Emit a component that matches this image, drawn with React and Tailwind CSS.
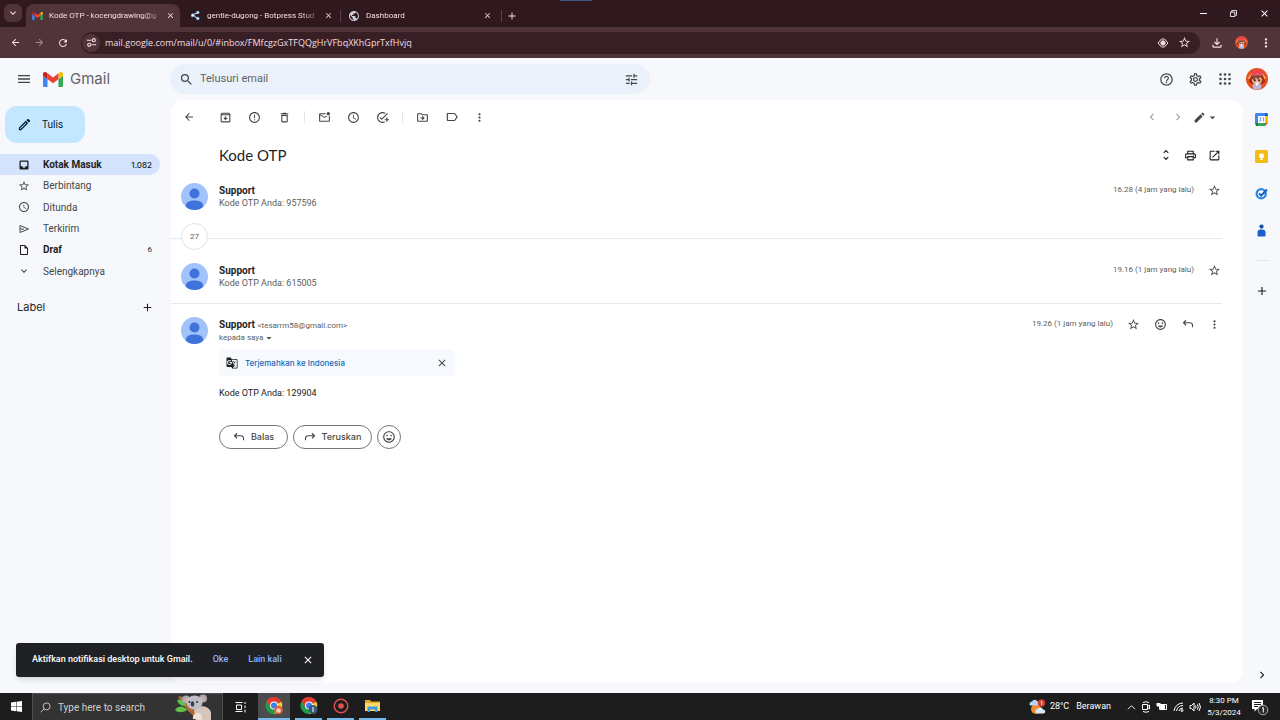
import React from "react";
import {
  MdArrowBack, MdArrowForward, MdRefresh, MdOutlineArchive, MdErrorOutline, MdOutlineDelete,
  MdOutlineMarkEmailUnread, MdAccessTime, MdOutlineAddTask, MdOutlineDriveFileMove,
  MdLabelOutline, MdMoreVert, MdChevronLeft, MdChevronRight, MdEdit, MdOutlineEdit, MdArrowDropDown,
  MdUnfoldMore, MdOutlinePrint, MdOpenInNew, MdStarBorder, MdInsertEmoticon, MdGTranslate,
  MdMenu, MdSearch, MdTune, MdHelpOutline, MdOutlineSettings, MdOutlineInsertDriveFile,
  MdKeyboardArrowDown, MdAdd, MdClose, MdPublic, MdOutlineFileDownload,
} from "react-icons/md";

const sans = "font-['Roboto','Open_Sans',sans-serif]";
const inter = "font-['Inter','Open_Sans',sans-serif]";
const openSans = "font-['Open_Sans','Noto_Sans',sans-serif]";

function GmailLogo({ className }) {
  return (
    <svg viewBox="52 42 88 66" className={className} aria-hidden="true">
      <path fill="#4285f4" d="M58 108h14V74L52 59v43c0 3.32 2.69 6 6 6" />
      <path fill="#34a853" d="M120 108h14c3.32 0 6-2.69 6-6V59l-20 15" />
      <path fill="#fbbc04" d="M120 48v26l20-15v-8c0-7.42-8.47-11.65-14.4-7.2" />
      <path fill="#ea4335" d="M72 74V48l24 18 24-18v26L96 92" />
      <path fill="#c5221f" d="M52 51v8l20 15V48l-5.6-4.2c-5.94-4.45-14.4-.22-14.4 7.2" />
    </svg>
  );
}

function ProfilePicture({ className }) {
  return (
    <svg viewBox="0 0 24 24" className={className} aria-hidden="true">
      <circle cx="12" cy="12" r="12" fill="#e8501c" />
      <path d="M6 5l3-4 3 3 4-3 3 5-2 3H7z" fill="#f0435a" />
      <path d="M2 11l4-5 1 2-3 4zM22 11l-4-5-1 2 3 4z" fill="#f8b27c" />
      <path d="M3 15l3-8 3 3-2 8zM21 15l-3-8-3 3 2 8z" fill="#a92b1a" />
      <circle cx="12" cy="12.5" r="5.500" fill="#e9b996" />
      <path d="M6 12c0-6 12-6 12 0l-3-2-2 3-2-3-2 3z" fill="#8a4630" />
      <circle cx="9.6" cy="13.500" r="1.200" fill="#3f2830" />
      <circle cx="14.4" cy="13.500" r="1.200" fill="#3f2830" />
      <path d="M7 19c2-3 8-3 10 0l-1 4a12 12 0 01-8 0z" fill="#b9b6dc" />
      <path d="M10 16h4l-2 4z" fill="#fff" />
    </svg>
  );
}

function Person() {
  return (
    <svg viewBox="0 0 27 27" className="size-[27px] shrink-0" role="img" aria-label="Support">
      <circle cx="13.500" cy="13.500" r="13.500" fill="#a1c2fa" />
      <circle cx="13.500" cy="10.500" r="5" fill="#4072dc" />
      <path d="M4.800 23.800v-1c0-3.800 3.800-5.400 8.700-5.400s8.700 1.600 8.700 5.400v1a13.500 13.500 0 01-17.400 0z" fill="#4072dc" />
    </svg>
  );
}

function ReplyArrow({ flip }) {
  return (
    <svg viewBox="0 0 24 24" className={flip ? "size-3 -scale-x-100" : "size-3"} fill="none" stroke="currentColor" strokeWidth="2.200" aria-hidden="true">
      <path d="M8 4.500L3 9.500l5 5M3 9.500h13a5 5 0 015 5v4" />
    </svg>
  );
}

function InboxIcon({ className }) {
  return (
    <svg viewBox="0 0 24 24" className={className} fill="currentColor" fillRule="evenodd" aria-hidden="true">
      <path d="M5 3h14a2 2 0 012 2v14a2 2 0 01-2 2H5a2 2 0 01-2-2V5a2 2 0 012-2zM5.500 5.500v9H9a3 3 0 006 0h3.500v-9z" />
    </svg>
  );
}

function SendIcon({ className }) {
  return (
    <svg viewBox="0 0 24 24" className={className} fill="none" stroke="currentColor" strokeWidth="2" aria-hidden="true">
      <path d="M4 5l17 7-17 7zM4 12h8" />
    </svg>
  );
}

function Dots() {
  return (
    <svg viewBox="0 0 12 12" className="size-3" fill="currentColor" aria-hidden="true">
      {[1.5, 6, 10.5].map((y) => [1.5, 6, 10.5].map((x) => <circle key={`${x}-${y}`} cx={x} cy={y} r="1.3" />))}
    </svg>
  );
}

function Chrome({ children }) {
  return (
    <svg viewBox="0 0 18 18" className="size-[18px]" aria-hidden="true">
      <path d="M9 8.500L1.600 4.200A8.500 8.500 0 0116.400 4.800z" fill="#e33b2e" />
      <path d="M9 8.500L16.400 4.800A8.500 8.500 0 019 17z" fill="#fcc934" />
      <path d="M9 8.500L1.600 4.200A8.500 8.500 0 009 17l3-6z" fill="#1e9e4a" />
      <path d="M9 4.700h7.400a8.500 8.500 0 00-14.800-.5L5.500 11z" fill="#e33b2e" />
      <circle cx="9" cy="8.500" r="4" fill="#fff" />
      <circle cx="9" cy="8.500" r="3.100" fill="#3b82ec" />
      {children}
    </svg>
  );
}

function IconButton({ label, className = "w-[29px]", children }) {
  return (
    <button type="button" aria-label={label} className={`flex h-6 shrink-0 items-center justify-center ${className}`}>
      {children}
    </button>
  );
}

function Tab({ icon, title, active, width }) {
  return (
    <div className={`flex h-[23px] items-center rounded-t-lg pl-[6px] pr-[5px] ${width} ${active ? "bg-[#51343a]" : ""}`}>
      {icon}
      <span className="ml-[6px] min-w-0 flex-1 whitespace-nowrap [mask-image:linear-gradient(to_right,black_80%,transparent)]">{title}</span>
      <button type="button" aria-label={`Tutup ${title}`} className="flex size-[10px] items-center justify-center"><MdClose className="size-[9px]" /></button>
    </div>
  );
}

function BrowserBar() {
  return (
    <header className="relative bg-[#30191e] text-[#f3dde0]">
      <span className="absolute left-[calc(50%-80px)] top-0 h-px w-8 bg-[#3d5a86]" />
      <div className="flex h-[27px] items-end text-[8px]">
        <button type="button" aria-label="Telusuri tab" className="mb-[5px] ml-1 flex size-[18px] items-center justify-center rounded-md bg-[#51343a]"><MdKeyboardArrowDown className="size-3" /></button>
        <div className="ml-1 flex flex-1 items-center">
          <Tab active width="w-[154px]" title="Kode OTP - kocengdrawing@g" icon={<GmailLogo className="h-2 w-[11px]" />} />
          <Tab
            width="w-[158px]"
            title="gentle-dugong - Botpress Stud"
            icon={
              <svg viewBox="0 0 11 11" className="ml-1 size-[11px]" fill="#fff" stroke="#6fb3e8" aria-hidden="true">
                <path d="M7.500 2.500L3 5l4.500 3.500" fill="none" stroke="#fff" />
                <circle cx="7.800" cy="2.500" r="1.300" /><circle cx="2.800" cy="5.300" r="1.500" /><circle cx="7.800" cy="8.500" r="1.300" />
              </svg>
            }
          />
          <span className="ml-[2px] h-3 w-px bg-[#5b3d43]" />
          <Tab width="w-[156px]" title="Dashboard" icon={<MdPublic className="ml-px size-3 text-[#c9ccd4]" />} />
          <span className="ml-1 h-3 w-px bg-[#5b3d43]" />
          <button type="button" aria-label="Tab baru" className="ml-[2px] p-[2px]"><MdAdd className="size-3" /></button>
        </div>
        <div className="flex h-full items-center text-white">
          <button type="button" aria-label="Minimalkan" className="flex w-[30px] justify-center"><span className="h-px w-[7px] bg-white" /></button>
          <button type="button" aria-label="Pulihkan" className="flex w-[31px] justify-center">
            <svg viewBox="0 0 8 8" className="size-[7px]" fill="none" stroke="currentColor" aria-hidden="true"><path d="M.5 2.500h5v5h-5zM2 2.500V.5h5.500V6H6" /></svg>
          </button>
          <button type="button" aria-label="Tutup" className="flex w-[31px] justify-center"><MdClose className="size-[11px]" /></button>
        </div>
      </div>
      <div className="flex h-[31px] items-center bg-[#51343a]">
        <IconButton label="Kembali" className="w-[30px]"><MdArrowBack className="size-[11px]" /></IconButton>
        <IconButton label="Maju" className="w-[18px] text-[#a98b90]"><MdArrowForward className="size-[11px]" /></IconButton>
        <IconButton label="Muat ulang" className="w-[29px]"><MdRefresh className="size-3" /></IconButton>
        <div className="ml-1 flex h-[22px] flex-1 items-center rounded-full bg-[#371f25] pl-px pr-[9px]">
          <button type="button" aria-label="Info situs" className="flex size-[18px] items-center justify-center rounded-full bg-[#51343a]">
            <svg viewBox="0 0 12 12" className="size-[11px]" fill="none" stroke="currentColor" strokeWidth="1.200" aria-hidden="true"><path d="M1 3.500h5M6 8.500h5" /><circle cx="8.500" cy="3.500" r="1.700" /><circle cx="3.500" cy="8.500" r="1.700" /></svg>
          </button>
          <input aria-label="Alamat" className={`ml-[5px] min-w-0 flex-1 bg-transparent text-[9px] outline-none ${openSans}`} defaultValue="mail.google.com/mail/u/0/#inbox/FMfcgzGxTFQQgHrVFbqXKhGprTxfHvjq" />
          <button type="button" aria-label="Pratinjau">
            <svg viewBox="0 0 12 12" className="size-3" fill="none" stroke="currentColor" aria-hidden="true"><path d="M1 6l3.500-4h3L11 6l-3.500 4h-3z" /><circle cx="6" cy="6" r="2.200" fill="currentColor" /></svg>
          </button>
          <button type="button" aria-label="Tandai halaman" className="ml-[9px]"><MdStarBorder className="size-[13px]" /></button>
        </div>
        <IconButton label="Unduhan" className="ml-[3px] w-[27px]"><MdOutlineFileDownload className="size-[14px]" /></IconButton>
        <IconButton label="Profil" className="w-[22px]"><ProfilePicture className="size-[13px]" /></IconButton>
        <IconButton label="Menu Chrome" className="w-7"><MdMoreVert className="size-[14px]" /></IconButton>
      </div>
    </header>
  );
}

function GmailHeader() {
  return (
    <div className="flex h-[42px] items-center text-[#444746]">
      <div className="flex w-[170px] items-center">
        <IconButton label="Menu utama" className="ml-[10px] w-7"><MdMenu className="size-4" /></IconButton>
        <a href="#inbox" className={`ml-[5px] flex items-center gap-[7px] text-[15px] text-[#5f6368] ${inter}`}><GmailLogo className="h-[15px] w-5" />Gmail</a>
      </div>
      <form className="flex h-[30px] w-[480px] items-center rounded-full bg-[#eaf1fb] pl-[9px] pr-[11px]" onSubmit={(e) => e.preventDefault()}>
        <button type="submit" aria-label="Telusuri"><MdSearch className="size-[15px]" /></button>
        <input aria-label="Telusuri email" placeholder="Telusuri email" className="ml-[6px] min-w-0 flex-1 bg-transparent text-[11px] outline-none placeholder:text-[#5f6368]" />
        <button type="button" aria-label="Opsi penelusuran"><MdTune className="size-[15px]" /></button>
      </form>
      <div className="ml-auto flex items-center">
        <IconButton label="Dukungan"><MdHelpOutline className="size-[15px]" /></IconButton>
        <IconButton label="Setelan"><MdOutlineSettings className="size-[15px]" /></IconButton>
        <IconButton label="Aplikasi Google"><Dots /></IconButton>
        <IconButton label="Akun Google" className="ml-[7px] mr-3 w-[22px]"><ProfilePicture className="size-[22px]" /></IconButton>
      </div>
    </div>
  );
}

const folders = [
  { label: "Kotak Masuk", Icon: InboxIcon, count: "1.082", active: true, bold: true },
  { label: "Berbintang", Icon: MdStarBorder },
  { label: "Ditunda", Icon: MdAccessTime },
  { label: "Terkirim", Icon: SendIcon },
  { label: "Draf", Icon: MdOutlineInsertDriveFile, count: "6", bold: true },
  { label: "Selengkapnya", Icon: MdKeyboardArrowDown },
];

function Sidebar() {
  return (
    <aside className="w-[171px] shrink-0 pt-[6px]">
      <button type="button" className="ml-[5px] flex h-[37px] w-20 items-center rounded-xl bg-[#c2e7ff] pl-3 text-[10px] text-[#001d35]">
        <MdOutlineEdit className="size-[15px]" /><span className="ml-[10px]">Tulis</span>
      </button>
      <nav aria-label="Folder" className="mt-[11px] grid h-32 w-40 grid-rows-6 text-[10px] text-[#444746]">
        {folders.map(({ label, Icon, count, active, bold }) => (
          <a key={label} href="#folder" className={`flex items-center rounded-r-full pl-[18px] pr-2 ${active ? "bg-[#d3e3fd] text-[#001d35]" : ""} ${bold ? "font-bold text-[#1f1f1f]" : ""}`}>
            <Icon className="size-3" /><span className="ml-[13px] flex-1">{label}</span>
            <span className={active ? `text-[8px] font-medium ${inter}` : "text-[8px] font-normal"}>{count}</span>
          </a>
        ))}
      </nav>
      <div className="mt-[17px] flex items-center pl-[17px] pr-[17px] text-[#1f1f1f]">
        <h2 className={`flex-1 text-[11px] ${inter}`}>Label</h2>
        <button type="button" aria-label="Buat label baru"><MdAdd className="size-[13px]" /></button>
      </div>
    </aside>
  );
}

function Toolbar() {
  const sep = "mx-[5px] h-3 w-px bg-[#e3e5e8]";
  return (
    <div className="flex h-[34px] items-center pl-[3px] pr-[21px] text-[#444746]">
      <IconButton label="Kembali ke Kotak Masuk" className="mr-2 w-[29px]"><MdArrowBack className="size-3" /></IconButton>
      <IconButton label="Arsipkan"><MdOutlineArchive className="size-[13px]" /></IconButton>
      <IconButton label="Laporkan spam"><MdErrorOutline className="size-[13px]" /></IconButton>
      <IconButton label="Hapus" className="w-[30px]"><MdOutlineDelete className="size-[13px]" /></IconButton>
      <span className={sep} />
      <IconButton label="Tandai belum dibaca"><MdOutlineMarkEmailUnread className="size-[13px]" /></IconButton>
      <IconButton label="Tunda"><MdAccessTime className="size-[13px]" /></IconButton>
      <IconButton label="Tambahkan ke Tasks"><MdOutlineAddTask className="size-[13px]" /></IconButton>
      <span className={sep} />
      <IconButton label="Pindahkan ke"><MdOutlineDriveFileMove className="size-[13px]" /></IconButton>
      <IconButton label="Label"><MdLabelOutline className="size-[14px]" /></IconButton>
      <IconButton label="Lainnya" className="w-[27px]"><MdMoreVert className="size-[13px]" /></IconButton>
      <div className="ml-auto flex items-center">
        <IconButton label="Lebih baru" className="w-[27px] text-[#a0a3a5]"><MdChevronLeft className="size-[14px]" /></IconButton>
        <IconButton label="Lebih lama" className="w-[25px] text-[#a0a3a5]"><MdChevronRight className="size-[14px]" /></IconButton>
        <IconButton label="Alat input" className="w-8"><MdEdit className="size-[13px]" /><MdArrowDropDown className="size-[13px]" /></IconButton>
      </div>
    </div>
  );
}

function MessageHead({ email, to, snippet, time, children }) {
  return (
    <div className="flex items-start pl-[10px] pr-[15px]">
      <Person />
      <div className="ml-[11px] min-w-0 flex-1 pt-px">
        <h3 className="text-[10px] font-bold leading-[13px] text-[#1f1f1f]">
          Support {email && <span className="text-[8px] font-normal text-[#5e5e5e]">&lt;{email}&gt;</span>}
        </h3>
        {snippet && <p className="text-[9px] leading-[13px] text-[#5e5e5e]">{snippet}</p>}
        {to && <button type="button" className="flex items-center text-[8px] leading-3 text-[#5e5e5e]">{to}<MdArrowDropDown className="size-3 text-[#444746]" /></button>}
      </div>
      <div className="flex h-[14px] items-center text-[#444746]">
        <time className="mr-[7px] text-[8px] text-[#5e5e5e]">{time}</time>
        <IconButton label="Bintangi" className="w-[27px]"><MdStarBorder className="size-[13px]" /></IconButton>
        {children}
      </div>
    </div>
  );
}

function Thread() {
  const pill = "flex h-6 items-center justify-center rounded-full border border-[#747775]";
  return (
    <main className="flex min-w-0 flex-1 flex-col rounded-xl bg-white">
      <Toolbar />
      <div className="flex h-[42px] items-center pl-12 pr-[17px] text-[#1f1f1f]">
        <h1 className="flex-1 font-['Lato',sans-serif] text-[15px]">Kode OTP</h1>
        <IconButton label="Luaskan semua" className="w-6"><MdUnfoldMore className="size-[14px]" /></IconButton>
        <IconButton label="Cetak semua" className="w-6"><MdOutlinePrint className="size-[13px]" /></IconButton>
        <IconButton label="Di jendela baru" className="w-6"><MdOpenInNew className="size-[13px]" /></IconButton>
      </div>
      <article className="relative h-[63px] pt-[7px]">
        <MessageHead snippet="Kode OTP Anda: 957596" time="16.28 (4 jam yang lalu)" />
        <hr className="absolute bottom-0 left-0 right-[21px] border-[#e6e8eb]" />
        <button type="button" aria-label="27 pesan lainnya" className="absolute -bottom-[11px] left-[10px] flex size-[27px] items-center justify-center rounded-full border border-[#dfe1e5] bg-white text-[8px] text-[#5e5e5e]">27</button>
      </article>
      <article className="h-16 pt-6">
        <MessageHead snippet="Kode OTP Anda: 615005" time="19.16 (1 jam yang lalu)" />
      </article>
      <hr className="mr-[21px] border-[#e6e8eb]" />
      <article className="pt-[13px]">
        <MessageHead email="tesarrm58@gmail.com" to="kepada saya" time="19.26 (1 jam yang lalu)">
          <IconButton label="Tambahkan reaksi" className="w-[27px]"><MdInsertEmoticon className="size-[13px]" /></IconButton>
          <IconButton label="Balas" className="w-[27px]"><ReplyArrow /></IconButton>
          <IconButton label="Lainnya" className="w-[27px]"><MdMoreVert className="size-[13px]" /></IconButton>
        </MessageHead>
        <div className={`ml-12 ${inter}`}>
          <div className="mt-[5px] flex h-[27px] w-[236px] items-center rounded bg-[#f6fafe] pl-[7px] pr-[7px] text-[8px]">
            <MdGTranslate className="size-3 text-[#1f1f1f]" />
            <a href="#translate" className="ml-[7px] flex-1 font-medium text-[#1a67b8]">Terjemahkan ke Indonesia</a>
            <button type="button" aria-label="Tutup terjemahan"><MdClose className="size-3 text-[#444746]" /></button>
          </div>
          <p className={`mt-[11px] text-[9px] leading-[13px] text-[#222222] ${sans}`}>Kode OTP Anda: 129904</p>
          <div className="mt-[25px] flex gap-[5px] text-[9px] font-medium text-[#444746]">
            <button type="button" className={`${pill} w-[69px] gap-[6px]`}><ReplyArrow />Balas</button>
            <button type="button" className={`${pill} w-[79px] gap-[6px]`}><ReplyArrow flip />Teruskan</button>
            <button type="button" aria-label="Tambahkan reaksi emoji" className={`${pill} w-6`}><MdInsertEmoticon className="size-[14px] shrink-0" /></button>
          </div>
        </div>
      </article>
    </main>
  );
}

function AppRail() {
  const item = "flex h-[37px] w-full items-center justify-center";
  return (
    <aside className="flex w-[37px] shrink-0 flex-col items-center pt-px text-[#1f1f1f]">
      <button type="button" aria-label="Kalender" className={item}>
        <svg viewBox="0 0 13 13" className="size-[13px]" aria-hidden="true">
          <path fill="#4285f4" d="M1 0h9v3H3v7H0V1z" /><path fill="#1967d2" d="M10 0h2l1 1v2h-3z" /><path fill="#fbbc04" d="M10 3h3v7h-3z" /><path fill="#34a853" d="M3 10h7v3H3z" /><path fill="#188038" d="M0 10h3v3H1z" /><path fill="#ea4335" d="M10 10h3l-3 3z" /><path fill="#fff" d="M3 3h7v7H3z" />
          <path fill="none" stroke="#4285f4" strokeWidth=".8" d="M4.300 4.800h1.600L5.200 6.200l.8.900-.6 1H4.200M7.500 5l1-.4v3.900" />
        </svg>
      </button>
      <button type="button" aria-label="Keep" className={item}>
        <svg viewBox="0 0 13 13" className="size-[13px]" aria-hidden="true"><rect width="13" height="13" rx="1.500" fill="#f5bb15" /><circle cx="6.500" cy="5.800" r="2.500" fill="#fff" /><path d="M5.300 8.500h2.400V10H5.300z" fill="#fff" /></svg>
      </button>
      <button type="button" aria-label="Tasks" className={item}>
        <svg viewBox="0 0 13 13" className="size-[13px]" fill="none" aria-hidden="true"><circle cx="6.200" cy="6.800" r="4.600" stroke="#2a86dc" strokeWidth="2.200" /><path d="M4 6.500l2.200 2L12 2.500" stroke="#1767b8" strokeWidth="2" /></svg>
      </button>
      <button type="button" aria-label="Kontak" className={item}>
        <svg viewBox="0 0 13 13" className="size-[13px]" aria-hidden="true"><circle cx="6.500" cy="2.600" r="2.100" fill="#174ea6" /><path d="M2.500 8.500a3 3 0 013-3h2a3 3 0 013 3v3a1 1 0 01-1 1h-6a1 1 0 01-1-1z" fill="#1a5fcb" /></svg>
      </button>
      <hr className="mt-[11px] w-[14px] border-[#e3e5e9]" />
      <IconButton label="Instal add-on" className="mt-[18px] w-[29px]"><MdAdd className="size-[14px]" /></IconButton>
      <IconButton label="Sembunyikan panel samping" className="mb-[-4px] mt-auto w-[29px]"><MdChevronRight className="size-[14px]" /></IconButton>
    </aside>
  );
}

function Toast() {
  return (
    <div role="status" className="absolute bottom-4 left-4 flex h-[34px] w-[308px] items-center gap-5 whitespace-nowrap rounded-[3px] bg-[#202124] px-4 text-[9px] font-medium text-white shadow-md">
      <span>Aktifkan notifikasi desktop untuk Gmail.</span>
      <button type="button" className="text-[#8ab4f8]">Oke</button>
      <button type="button" className="text-[#8ab4f8]">Lain kali</button>
      <button type="button" aria-label="Tutup notifikasi"><MdClose className="size-3" /></button>
    </div>
  );
}

function Koala() {
  return (
    <svg viewBox="0 0 38 26" className="h-[26px] w-[38px]" aria-hidden="true">
      <path d="M4 3l3-1 8 7 12 14-3 3-11-10z" fill="#b1682f" />
      <path d="M1 16c4-5 9-4 12 0-4 3-9 3-12 0zM3 6c5-1 8 2 9 6-5 0-8-2-9-6z" fill="#5fc04a" />
      <path d="M20 16c4-6 16-5 17 3v7H22z" fill="#d6c5b8" />
      <circle cx="12" cy="5.500" r="4" fill="#a9a6ad" /><circle cx="29" cy="4.500" r="4" fill="#a9a6ad" />
      <circle cx="12.500" cy="6" r="2" fill="#dcaaa6" /><circle cx="28.500" cy="5" r="2" fill="#dcaaa6" />
      <ellipse cx="20.500" cy="8.500" rx="8" ry="7" fill="#bfbdc6" />
      <ellipse cx="18.500" cy="10" rx="1.800" ry="2.800" fill="#3c3a44" /><circle cx="15.500" cy="8" r=".9" fill="#222" /><circle cx="23" cy="8" r=".9" fill="#222" />
      <path d="M19 25c-1-5 4-8 8-5l1 6z" fill="#efe1d6" />
    </svg>
  );
}

function Taskbar() {
  const app = "flex h-full w-[27px] items-center justify-center border-b-2 border-[#76b9ed]";
  return (
    <footer className="flex h-[27px] items-center bg-[#1d1d1d] text-white">
      <button type="button" aria-label="Mulai" className="flex w-8 justify-center">
        <svg viewBox="0 0 11 11" className="size-[11px]" fill="currentColor" aria-hidden="true"><path d="M0 1.500l5-.7v4.500H0zM5.500.700L11 0v5.300H5.500zM0 5.800h5v4.500l-5-.7zM5.500 5.800H11V11l-5.500-.8z" /></svg>
      </button>
      <button type="button" className="flex h-full w-[191px] items-center border border-b-0 border-[#505050] bg-[#333333] pl-[7px] pr-[10px] text-[10px] text-[#d0d0d0]">
        <svg viewBox="0 0 12 12" className="size-[11px]" fill="none" stroke="currentColor" aria-hidden="true"><circle cx="7.200" cy="4.800" r="3.800" /><path d="M4.500 7.500L.8 11.200" /></svg>
        <span className="ml-[7px] flex-1 text-left">Type here to search</span>
        <Koala />
      </button>
      <button type="button" aria-label="Tampilan tugas" className="flex w-[35px] justify-center">
        <svg viewBox="0 0 12 12" className="size-3" fill="none" stroke="currentColor" aria-hidden="true"><path d="M1.500 4h5v4.500h-5zM.5 1.500h7M.5 10.500h7M10 1v2M10 4.500v2.500M10 8.500v3" /></svg>
      </button>
      <div className="flex h-full gap-[5px]">
        <button type="button" aria-label="Google Chrome" className="flex h-full w-8 items-center justify-center border-b-2 border-[#76b9ed] bg-[#4b4b4b]">
          <Chrome><circle cx="13.500" cy="13" r="4.300" fill="#e0603a" /><circle cx="13.500" cy="13.500" r="2.300" fill="#f2d3bd" /></Chrome>
        </button>
        <button type="button" aria-label="Google Chrome profil 2" className={app}>
          <Chrome><circle cx="13" cy="12.500" r="4.500" fill="#3c5a78" /><path d="M13 10v5" stroke="#fff" /></Chrome>
        </button>
        <button type="button" aria-label="Perekam layar" className={app}>
          <svg viewBox="0 0 16 16" className="size-4" fill="none" aria-hidden="true"><circle cx="8" cy="8" r="6.800" stroke="#d9504d" strokeWidth="1.500" /><circle cx="8" cy="8" r="2.800" fill="#e0524f" /></svg>
        </button>
        <button type="button" aria-label="File Explorer" className={app}>
          <svg viewBox="0 0 15 13" className="h-[13px] w-[15px]" aria-hidden="true"><path d="M0 1h5l1 1.500h9V12H0z" fill="#e9a820" /><path d="M0 4h15v8H0z" fill="#ffd868" /><path d="M2.500 7.500h10V13h-2.500v-2.500H5V13H2.500z" fill="#3d9be0" /></svg>
        </button>
      </div>
      <div className="ml-auto flex h-full items-center">
        <svg viewBox="0 0 17 16" className="h-4 w-[17px]" aria-hidden="true"><circle cx="7" cy="10" r="5" fill="#f08a2c" /><path d="M1 6.500a2.500 2.500 0 012-4 3 3 0 015.500 0A2 2 0 019 6.500z" fill="#b9d4f3" /><path d="M8 14.500a2.300 2.300 0 01.5-4.500 3 3 0 015.500.5 2 2 0 01.5 4z" fill="#dce9f8" /><circle cx="12.500" cy="4" r="3.700" fill="#d13b32" /><path d="M11.800 3l1-.7V6" stroke="#fff" strokeWidth=".8" fill="none" /></svg>
        <span className="ml-1 text-[9px]">28°C</span>
        <span className="ml-[7px] text-[9px]">Berawan</span>
        <div className="ml-4 flex items-center gap-[5px]">
          <svg viewBox="0 0 10 6" className="h-[6px] w-[9px]" fill="none" stroke="currentColor" aria-hidden="true"><path d="M1 5.500l4-4 4 4" /></svg>
          <svg viewBox="0 0 10 12" className="h-3 w-[10px]" fill="none" stroke="currentColor" aria-hidden="true"><path d="M2 1.500Q5 0 8 1.500M2 10.500Q5 12 8 10.500M1.500 3.500h5v5h-5zM6.500 5.500l2-1.500v4l-2-1.500" /></svg>
          <svg viewBox="0 0 12 9" className="h-[9px] w-3" fill="none" stroke="currentColor" aria-hidden="true"><path d="M3.500 2.500h7v5h-7z" /><path d="M4.500 3.500h4v3h-4zM1 1v3h3V1" fill="currentColor" /></svg>
          <svg viewBox="0 0 11 10" className="h-[10px] w-[11px]" fill="none" stroke="currentColor" aria-hidden="true"><path d="M1 9a9 9 0 019-8M3.500 9A6.500 6.500 0 0110 3.500M6 9a4 4 0 014-3" /><circle cx="9" cy="8.500" r="1" /></svg>
          <svg viewBox="0 0 12 10" className="h-[10px] w-3" fill="none" stroke="currentColor" aria-hidden="true"><path d="M1 3.500h1.500L5 1v8L2.500 6.500H1zM6.500 3.500q1 1.500 0 3M8.300 2.300q2 2.700 0 5.400M10 1q3 4 0 8" /></svg>
        </div>
        <time className="ml-[6px] w-[34px] text-center text-[8px] leading-3">8:30 PM<br />5/3/2024</time>
        <button type="button" aria-label="Notifikasi" className="ml-[10px] mr-[11px] flex">
          <svg viewBox="0 0 18 18" className="size-[18px]" aria-hidden="true"><path d="M1 2h11v9H6l-2.500 2.500V11H1z" fill="#fff" /><path d="M3 4.500h7M3 6.500h7M3 8.500h4" stroke="#1d1d1d" /><circle cx="12" cy="12" r="4.800" fill="#2b2b2b" stroke="#aaa" /><path d="M11 10.500l1.300-1v5" stroke="#fff" fill="none" /></svg>
        </button>
      </div>
    </footer>
  );
}

export default function App() {
  return (
    <div className={`flex min-h-screen flex-col bg-[#f6f8fc] ${sans}`}>
      <BrowserBar />
      <div className="relative flex flex-1 flex-col pb-[10px]">
        <GmailHeader />
        <div className="flex flex-1">
          <Sidebar />
          <Thread />
          <AppRail />
        </div>
        <Toast />
      </div>
      <Taskbar />
    </div>
  );
}
